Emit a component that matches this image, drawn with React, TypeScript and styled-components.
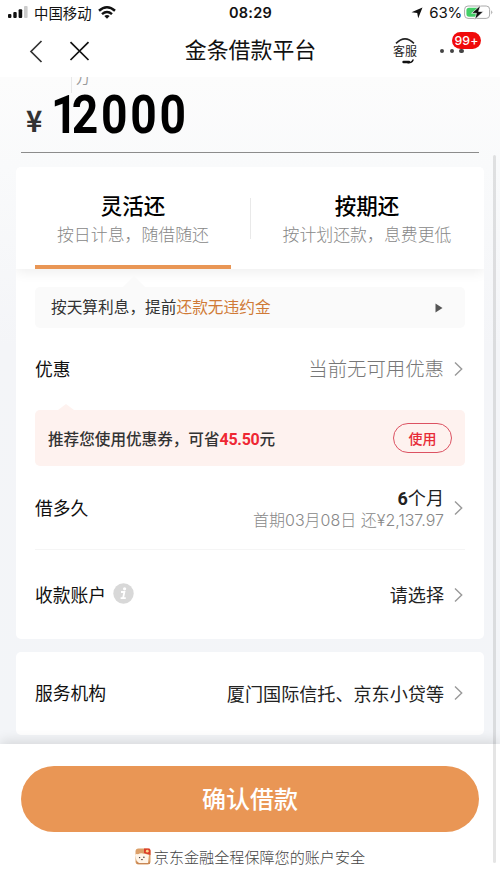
import React from "react";
import styled, { createGlobalStyle } from "styled-components";

const GlobalStyle = createGlobalStyle`
  * { box-sizing: border-box; }
  body {
    margin: 0;
    background: #fff;
    font-family: "Noto Sans CJK SC", sans-serif;
    color: #222;
  }
`;

const Page = styled.div`
  position: relative;
  width: 500px;
  height: 889px;
  overflow: hidden;
  display: flex;
  flex-direction: column;
  background: #fff;
  white-space: nowrap;
`;

const StatusBar = styled.header`
  height: 26px;
  flex: none;
  display: grid;
  grid-template-columns: 1fr auto 1fr;
  align-items: center;
  padding: 0 7px 1px 8px;
  color: #111;
`;

const StatusGroup = styled.div<{ $end?: boolean }>`
  display: flex;
  align-items: center;
  justify-content: ${(p) => (p.$end ? "flex-end" : "flex-start")};
`;

const Carrier = styled.span`
  font-size: 14.4px;
  line-height: 18px;
  margin: 0 6px;
`;

const Clock = styled.span`
  font: 600 14.5px/20px Inter, sans-serif;
  letter-spacing: 0.2px;
`;

const Percent = styled.span`
  font: 400 15px/20px Inter, sans-serif;
  letter-spacing: -0.2px;
  margin: 0 2px 0 6px;
`;

const NavBar = styled.nav`
  height: 51px;
  flex: none;
  display: grid;
  grid-template-columns: 1fr auto 1fr;
  align-items: center;
  padding: 0 27px 1px 28px;
`;

const NavGroup = styled.div<{ $end?: boolean }>`
  display: flex;
  align-items: center;
  justify-content: ${(p) => (p.$end ? "flex-end" : "flex-start")};
  gap: ${(p) => (p.$end ? "22px" : "25px")};
`;

const NavTitle = styled.h1`
  margin: 0;
  padding-bottom: 4px;
  font-size: 21.9px;
  line-height: 32px;
  font-weight: 400;
  color: #111;
`;

const Service = styled.div`
  display: flex;
  flex-direction: column;
  align-items: center;
  width: 26px;
  color: #222;
`;

const ServiceLabel = styled.span`
  font-size: 12px;
  line-height: 14px;
`;

const More = styled.div`
  position: relative;
  display: flex;
  gap: 5.5px;
  width: 33px;
`;

const Dot = styled.i`
  width: 4.2px;
  height: 4.2px;
  border-radius: 50%;
  background: #444;
`;

const Badge = styled.span`
  position: absolute;
  left: 12px;
  top: -17px;
  width: 29px;
  height: 17px;
  border-radius: 9px;
  background: #f00a0a;
  color: #fff;
  font: 500 12.3px/17px Inter, sans-serif;
  letter-spacing: 0.1px;
  text-align: center;
`;

const Content = styled.main`
  height: 667px;
  flex: none;
  overflow: hidden;
  padding: 0 16px;
  background: linear-gradient(#fcfcfc 0, #f9fafb 90px, #f4f5f8 270px, #f3f5f8 100%);
`;

const AmountBox = styled.section`
  position: relative;
  height: 76px;
  margin: 0 5px 14px;
  border-bottom: 1px solid #8c8c8c;
  display: flex;
  align-items: baseline;
  padding: 8px 0 0 5px;
`;

const UnitHint = styled.span`
  position: absolute;
  left: 50px;
  top: 0;
  height: 16px;
  padding-left: 4px;
  border-left: 1px solid #e8e8e8;
  font-size: 14px;
  line-height: 1px;
  color: #999;
`;

const Currency = styled.span`
  font: 700 30px/60px "Noto Sans CJK SC", sans-serif;
  width: 25px;
  color: #333;
  transform: translateY(-1px) scaleX(0.92);
  transform-origin: left;
`;

const Amount = styled.span`
  font: 700 54px/60px Roboto, sans-serif;
  letter-spacing: 3.3px;
  color: #000;
  transform: scaleX(0.855);
  transform-origin: left;
`;

const LeadDigit = styled.span`
  letter-spacing: -6.8px;
`;

const Card = styled.section<{ $height: number }>`
  height: ${(p) => p.$height}px;
  margin-bottom: 13px;
  border-radius: 5px;
  background: #fff;
  overflow: hidden;
`;

const Tabs = styled.div`
  position: relative;
  display: flex;
  height: 102px;
  background: #fff;
  box-shadow: 0 3px 12px rgba(0, 0, 0, 0.07);
`;

const Tab = styled.div<{ $active?: boolean }>`
  width: 234px;
  padding-top: 22px;
  display: flex;
  flex-direction: column;
  align-items: center;
  background: ${(p) =>
    p.$active
      ? "linear-gradient(#e99655, #e99655) 19px 98px / 196px 4px no-repeat"
      : "linear-gradient(#e9e9e9, #e9e9e9) 0 31px / 1px 41px no-repeat"};
`;

const TabTitle = styled.strong`
  font-size: 21.5px;
  line-height: 32px;
  font-weight: 500;
  color: #000;
`;

const TabNote = styled.span`
  font-size: 16.9px;
  line-height: 25px;
  font-weight: 300;
  color: #888;
`;

const Panel = styled.div<{ $flush?: boolean }>`
  padding: ${(p) => (p.$flush ? 0 : 18)}px 19px 0;
`;

const Tip = styled.div<{ $coupon?: boolean }>`
  position: relative;
  display: flex;
  align-items: center;
  justify-content: space-between;
  height: ${(p) => (p.$coupon ? 56 : 41)}px;
  padding: ${(p) => (p.$coupon ? "0 13px" : "0 22px 0 16px")};
  border-radius: 5px;
  background: ${(p) => (p.$coupon ? "#fef2ef" : "#fafafa")};
  font-size: ${(p) => (p.$coupon ? 15.6 : 15.7)}px;
  font-weight: ${(p) => (p.$coupon ? 500 : 400)};
  color: #333;

  &::before {
    content: "";
    position: absolute;
    left: ${(p) => (p.$coupon ? 23 : 88)}px;
    top: ${(p) => (p.$coupon ? -6 : -11)}px;
    border: solid transparent;
    border-width: ${(p) => (p.$coupon ? "0 8px 6px" : "0 11px 11px")};
    border-bottom-color: ${(p) => (p.$coupon ? "#fef2ef" : "#fafafa")};
  }
`;

const TipText = styled.span`
  padding-bottom: 2px;
`;

const Accent = styled.span`
  color: #d07a37;
`;

const Saving = styled.span`
  font: 700 16px/20px Roboto, sans-serif;
  letter-spacing: -0.3px;
  color: #ee2733;
`;

const UseButton = styled.button`
  width: 59px;
  height: 30px;
  padding: 0;
  border: 1px solid #dc5262;
  border-radius: 15px;
  background: transparent;
  color: #e72b37;
  font: 500 14px/26px "Noto Sans CJK SC", sans-serif;
`;

const Row = styled.div<{ $height: number; $line?: boolean }>`
  display: flex;
  align-items: center;
  height: ${(p) => p.$height}px;
  padding-right: 2px;
  border-bottom: ${(p) => (p.$line ? "1px solid #f5f5f5" : "none")};
`;

const Label = styled.span`
  flex: 1;
  display: flex;
  align-items: center;
  gap: 7px;
  padding-bottom: 2px;
  font-size: 17.8px;
  line-height: 26px;
  color: #111;
`;

const Value = styled.span<{ $muted?: boolean; $stacked?: boolean }>`
  display: flex;
  flex-direction: column;
  align-items: flex-end;
  margin-right: 10px;
  padding: ${(p) => (p.$stacked ? "2px 0 0" : p.$muted ? "0 0 2px" : "0 0 1px")};
  font-size: ${(p) => (p.$muted ? 19.4 : 18.1)}px;
  line-height: 24px;
  font-weight: ${(p) => (p.$muted ? 300 : 400)};
  color: ${(p) => (p.$muted ? "#777" : "#222")};
`;

const Count = styled.b`
  font: 700 18px/20px Roboto, sans-serif;
`;

const SubValue = styled.small`
  font: 300 16px/23px Inter, "Noto Sans CJK SC", sans-serif;
  color: #888;
`;

const Footer = styled.footer`
  position: relative;
  flex: 1;
  display: flex;
  flex-direction: column;
  align-items: center;
  padding-top: 22px;
  background: #fff;
  box-shadow: 0 -3px 12px rgba(0, 0, 0, 0.12);
`;

const Confirm = styled.button`
  width: 458px;
  height: 66px;
  padding: 0 0 2px;
  border: 0;
  border-radius: 33px;
  background: #e99655;
  color: #fff;
  font: 500 24px/64px "Noto Sans CJK SC", sans-serif;
`;

const Guarantee = styled.div`
  display: flex;
  align-items: center;
  gap: 3px;
  margin-top: 12px;
  font-size: 15.1px;
  line-height: 24px;
  font-weight: 300;
  color: #444;
`;

const ScrollThumb = styled.div`
  position: absolute;
  left: 493px;
  top: 155px;
  width: 3px;
  height: 708px;
  border-radius: 2px;
  background: rgba(0, 0, 0, 0.1);
`;

const Chevron = () => (
  <svg width="9" height="16" viewBox="0 0 9 16" fill="none" stroke="#999" strokeWidth="1.4">
    <path d="M1 1.5 7.7 8 1 14.5" />
  </svg>
);

const Signal = () => (
  <svg width="20" height="13" viewBox="0 0 20 13" fill="#111">
    <rect x="0" y="8" width="3.4" height="4" rx="1" />
    <rect x="5.3" y="6" width="3.4" height="6" rx="1" />
    <rect x="10.6" y="3.2" width="3.6" height="8.8" rx="1" />
    <rect x="16" y="0" width="3.6" height="12" rx="1" fill="#ccc" />
  </svg>
);

const Wifi = () => (
  <svg width="18" height="13" viewBox="0 0 18 13" fill="none" stroke="#111" strokeWidth="2.5">
    <path d="M1 4.8Q9-2.2 17 4.8" />
    <path d="M4 8.1Q9 4 14 8.1" />
    <path d="M6.3 10.1Q9 8 11.7 10.1L9 12.8Z" fill="#111" stroke="none" />
  </svg>
);

const Location = () => (
  <svg width="12" height="12" viewBox="0 0 12 12" fill="#111">
    <path d="M11.5.5 7.2 11.2 6.2 5.9.5 5.2Z" />
  </svg>
);

const Battery = () => (
  <svg width="29" height="15" viewBox="0 0 29 15">
    <rect x=".6" y="1" width="25" height="12.4" rx="3.4" fill="#fff" stroke="#aaa" />
    <path d="M5 2.7h8.5v9H5a2.6 2.6 0 0 1-2.6-2.6V5.3A2.6 2.6 0 0 1 5 2.7Z" fill="#43cf67" />
    <path d="M27.2 5.2q2.2 2 0 4.2Z" fill="#aaa" />
    <path d="M16.8 0 7.6 8.3h4.8L10.6 14.8 19.4 6.4h-4.8Z" fill="#111" stroke="#fff" strokeWidth=".7" />
  </svg>
);

const Back = () => (
  <svg width="15" height="23" viewBox="0 0 15 23" fill="none" stroke="#333" strokeWidth="1.7">
    <path d="M13.5 1 3 11.5 13.5 22" />
  </svg>
);

const Close = () => (
  <svg width="22" height="22" viewBox="0 0 22 22" fill="none" stroke="#111" strokeWidth="1.7">
    <path d="M2.5 2.2 20.5 20M20.5 2.2 2.5 20" />
  </svg>
);

const HeadsetTop = () => (
  <svg width="24" height="6" viewBox="0 0 24 6" fill="none" stroke="#222" strokeWidth="1.5">
    <path d="M3 5.4Q12-3.6 21 5.4" />
  </svg>
);

const HeadsetBottom = () => (
  <svg width="24" height="6" viewBox="0 0 24 6" fill="none" stroke="#111" strokeLinecap="round">
    <path d="M10.5 4h5.5" strokeWidth="2.4" />
    <path d="M15 4.8Q19 4.8 20 2" strokeWidth="1.5" />
  </svg>
);

const Info = () => (
  <svg width="21" height="21" viewBox="0 0 21 21">
    <circle cx="10.5" cy="10.5" r="10.2" fill="#d8d8d8" />
    <circle cx="11.6" cy="5.8" r="1.6" fill="#fff" />
    <path d="M8 9h3.4l-1.3 6M7.6 15.2h5.2" fill="none" stroke="#fff" strokeWidth="1.8" />
  </svg>
);

const Play = () => (
  <svg width="8" height="10" viewBox="0 0 8 10" fill="#555">
    <path d="M.5.5 7.5 5 .5 9.5Z" />
  </svg>
);

const Mascot = () => (
  <svg width="16" height="17" viewBox="0 0 16 17">
    <rect x=".5" y=".5" width="15" height="16" rx="3" fill="#dca069" />
    <path d="M0 7Q1 5.5 3 6.2 6 4.6 9 5.8l5 .9-1 8.3H3.5L1.5 12.5Z" fill="#fff5e9" />
    <path d="M9 .5h5.5L15.5 2v5L9 5Z" fill="#dd3d29" />
    <circle cx="12.3" cy="3.2" r="1.4" fill="#ffd48a" />
    <path d="M1 13 4 15h9l2-2v3H2Z" fill="#c88755" />
    <circle cx="4.6" cy="9.6" r=".7" fill="#332c2a" />
    <circle cx="8.9" cy="9.2" r=".7" fill="#332c2a" />
    <path d="M5.8 11h2.2l-1 1.5Z" fill="#443532" />
  </svg>
);

export default function App() {
  return (
    <Page>
      <GlobalStyle />
      <StatusBar>
        <StatusGroup>
          <Signal />
          <Carrier>中国移动</Carrier>
          <Wifi />
        </StatusGroup>
        <Clock>08:29</Clock>
        <StatusGroup $end>
          <Location />
          <Percent>63%</Percent>
          <Battery />
        </StatusGroup>
      </StatusBar>
      <NavBar>
        <NavGroup>
          <Back />
          <Close />
        </NavGroup>
        <NavTitle>金条借款平台</NavTitle>
        <NavGroup $end>
          <Service>
            <HeadsetTop />
            <ServiceLabel>客服</ServiceLabel>
            <HeadsetBottom />
          </Service>
          <More>
            <Dot />
            <Dot />
            <Dot />
            <Badge>99+</Badge>
          </More>
        </NavGroup>
      </NavBar>

      <Content>
        <AmountBox>
          <UnitHint>万</UnitHint>
          <Currency>¥</Currency>
          <Amount>
            <LeadDigit>1</LeadDigit>2000
          </Amount>
        </AmountBox>
        <Card $height={472}>
          <Tabs>
            <Tab $active>
              <TabTitle>灵活还</TabTitle>
              <TabNote>按日计息，随借随还</TabNote>
            </Tab>
            <Tab>
              <TabTitle>按期还</TabTitle>
              <TabNote>按计划还款，息费更低</TabNote>
            </Tab>
          </Tabs>
          <Panel>
            <Tip>
              <TipText>
                按天算利息，提前<Accent>还款无违约金</Accent>
              </TipText>
              <Play />
            </Tip>
            <Row $height={82}>
              <Label>优惠</Label>
              <Value $muted>当前无可用优惠</Value>
              <Chevron />
            </Row>
            <Tip $coupon>
              <span>
                推荐您使用优惠券，可省<Saving>45.50</Saving>元
              </span>
              <UseButton>使用</UseButton>
            </Tip>
            <Row $height={84} $line>
              <Label>借多久</Label>
              <Value $stacked>
                <span>
                  <Count>6</Count>个月
                </span>
                <SubValue>首期03月08日 还¥2,137.97</SubValue>
              </Value>
              <Chevron />
            </Row>
            <Row $height={89}>
              <Label>
                收款账户
                <Info />
              </Label>
              <Value>请选择</Value>
              <Chevron />
            </Row>
          </Panel>
        </Card>
        <Card $height={83}>
          <Panel $flush>
            <Row $height={82}>
              <Label>服务机构</Label>
              <Value>厦门国际信托、京东小贷等</Value>
              <Chevron />
            </Row>
          </Panel>
        </Card>
      </Content>

      <Footer>
        <Confirm>确认借款</Confirm>
        <Guarantee>
          <Mascot />
          京东金融全程保障您的账户安全
        </Guarantee>
      </Footer>
      <ScrollThumb />
    </Page>
  );
}
